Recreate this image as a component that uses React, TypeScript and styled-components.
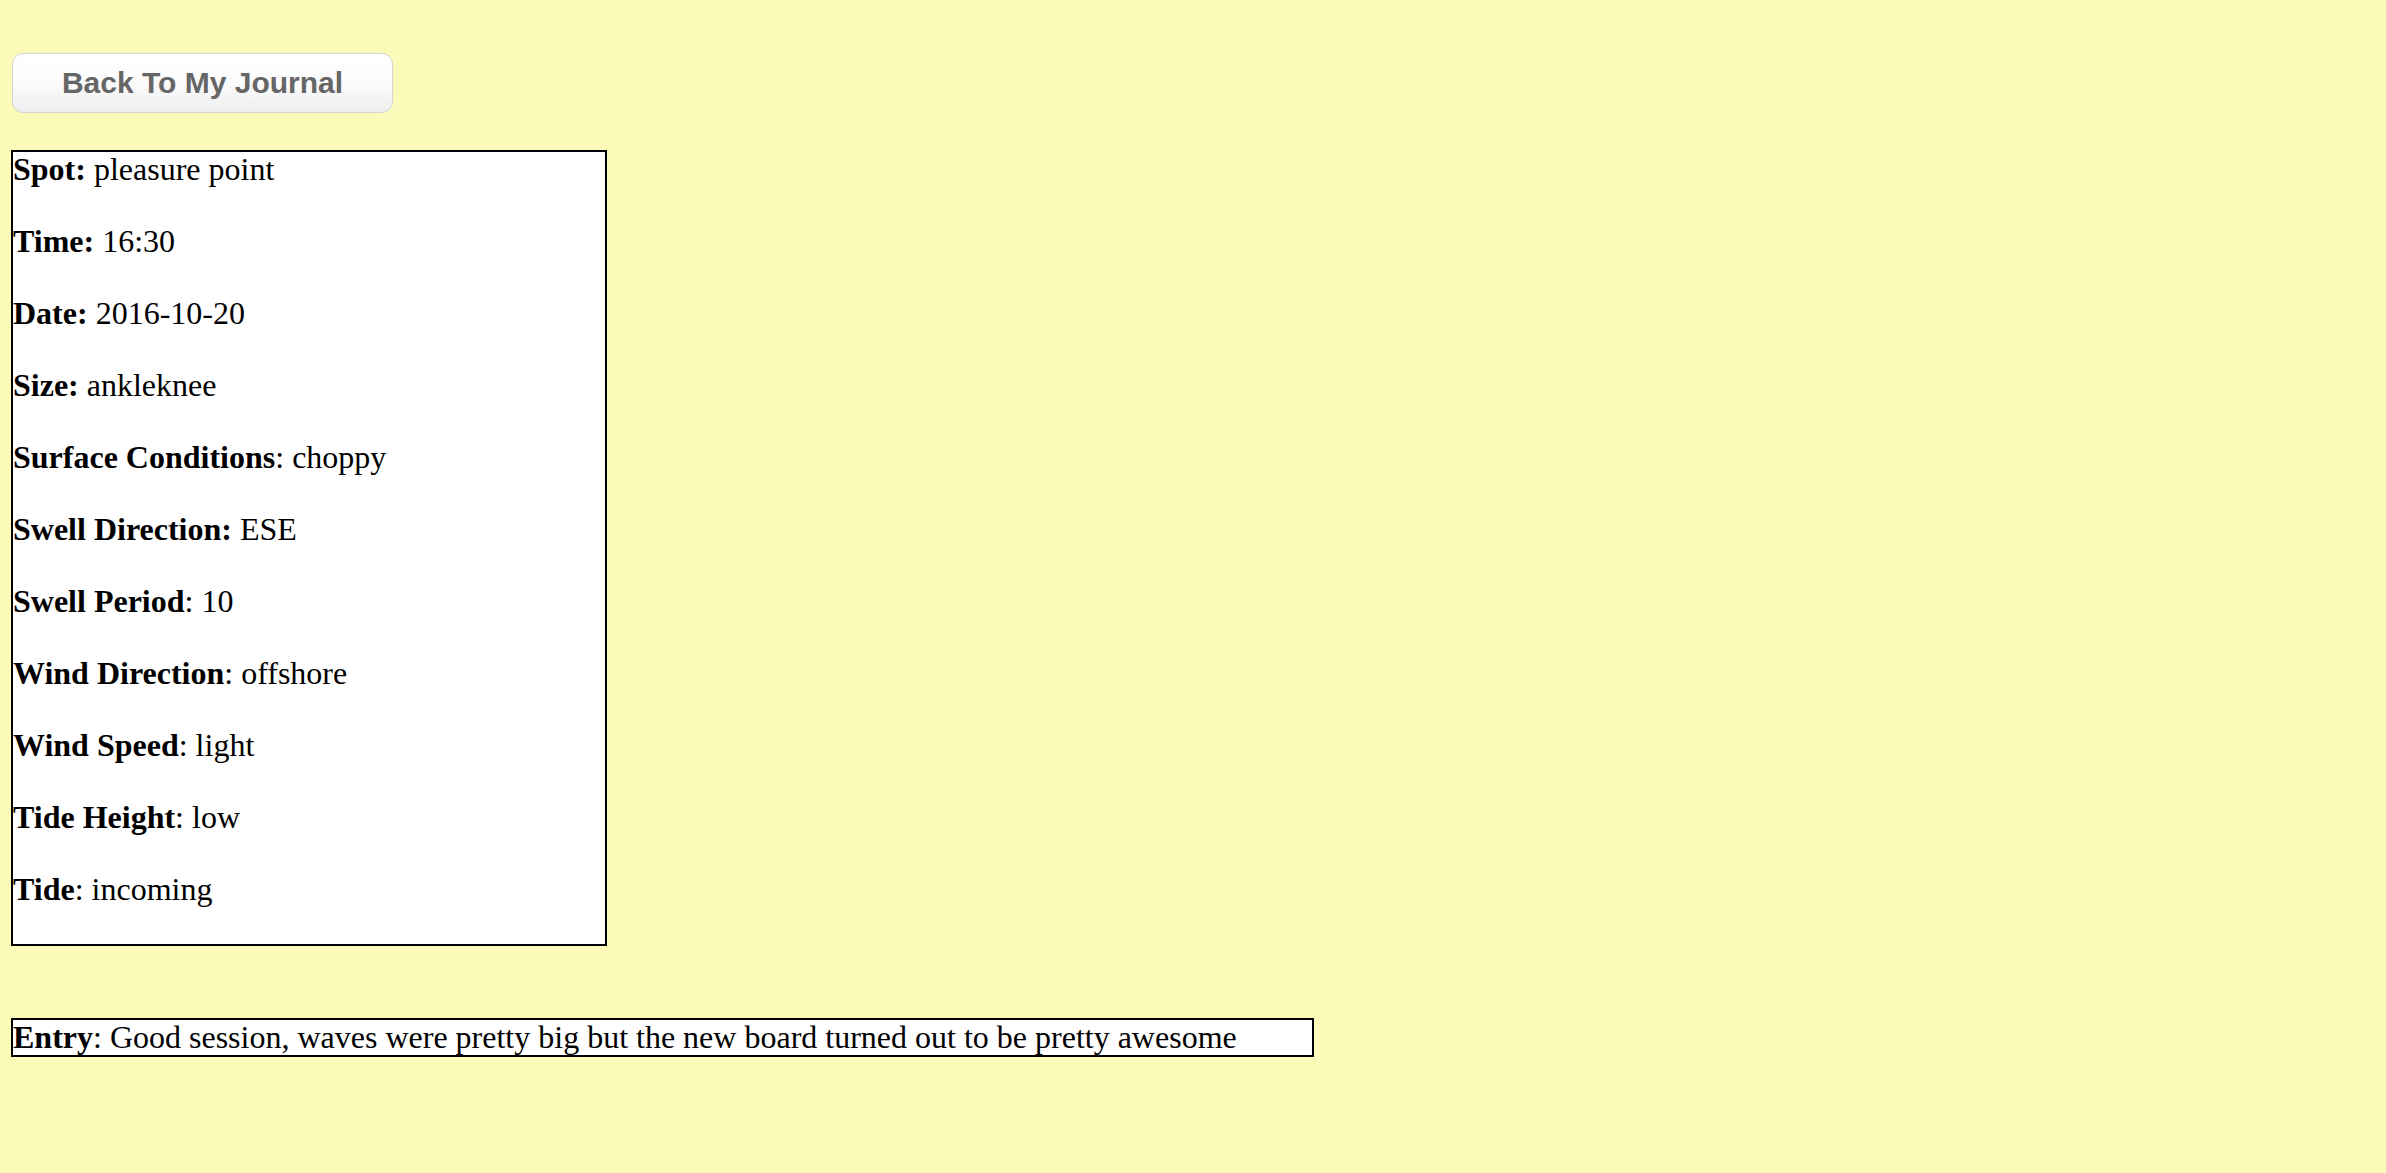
import React from "react";
import styled, { createGlobalStyle } from "styled-components";

const GlobalStyle = createGlobalStyle`
  html, body {
    margin: 0;
    padding: 0;
    background: #fcfab9;
  }
  body {
    font-family: "Liberation Serif", "Times New Roman", serif;
    color: #000;
  }
`;

const Page = styled.div`
  display: flex;
  flex-direction: column;
  align-items: flex-start;
  padding: 53px 0 100px 11px;
  min-height: 1173px;
  box-sizing: border-box;
  background: #fcfab9;
`;

const BackButton = styled.button`
  width: 381px;
  height: 60px;
  margin-left: 1px;
  box-sizing: border-box;
  border: 1.5px solid #d4d4d4;
  border-radius: 11px;
  background: linear-gradient(to bottom, #ffffff 0%, #fbfbfb 50%, #eeeeee 100%);
  color: #666666;
  font-family: "Liberation Sans", Arial, sans-serif;
  font-weight: bold;
  font-size: 30px;
  padding: 0;
  cursor: pointer;
`;

const DetailsBox = styled.div`
  margin-top: 37px;
  width: 596px;
  box-sizing: border-box;
  border: 2px solid #000;
  background: #fff;
  display: flex;
  flex-direction: column;
`;

const Row = styled.p`
  margin: 0 0 38px 0;
  font-size: 32px;
  line-height: 34px;
  white-space: nowrap;
`;

const Label = styled.b`
  font-weight: bold;
`;

const EntryBox = styled.div`
  margin-top: 72px;
  width: 1303px;
  box-sizing: border-box;
  border: 2px solid #000;
  background: #fff;
  font-size: 32px;
  line-height: 35px;
  white-space: nowrap;
`;

type Field = { label: string; value: string; colonInside: boolean };

const fields: Field[] = [
  { label: "Spot", value: "pleasure point", colonInside: true },
  { label: "Time", value: "16:30", colonInside: true },
  { label: "Date", value: "2016-10-20", colonInside: true },
  { label: "Size", value: "ankleknee", colonInside: true },
  { label: "Surface Conditions", value: "choppy", colonInside: false },
  { label: "Swell Direction", value: "ESE", colonInside: true },
  { label: "Swell Period", value: "10", colonInside: false },
  { label: "Wind Direction", value: "offshore", colonInside: false },
  { label: "Wind Speed", value: "light", colonInside: false },
  { label: "Tide Height", value: "low", colonInside: false },
  { label: "Tide", value: "incoming", colonInside: false },
];

export default function App() {
  return (
    <>
      <GlobalStyle />
      <Page>
        <BackButton>Back To My Journal</BackButton>
        <DetailsBox>
          {fields.map((f) => (
            <Row key={f.label}>
              {f.colonInside ? (
                <>
                  <Label>{f.label}:</Label> {f.value}
                </>
              ) : (
                <>
                  <Label>{f.label}</Label>: {f.value}
                </>
              )}
            </Row>
          ))}
        </DetailsBox>
        <EntryBox>
          <Label>Entry</Label>: Good session, waves were pretty big but the new board turned out to be pretty awesome
        </EntryBox>
      </Page>
    </>
  );
}
